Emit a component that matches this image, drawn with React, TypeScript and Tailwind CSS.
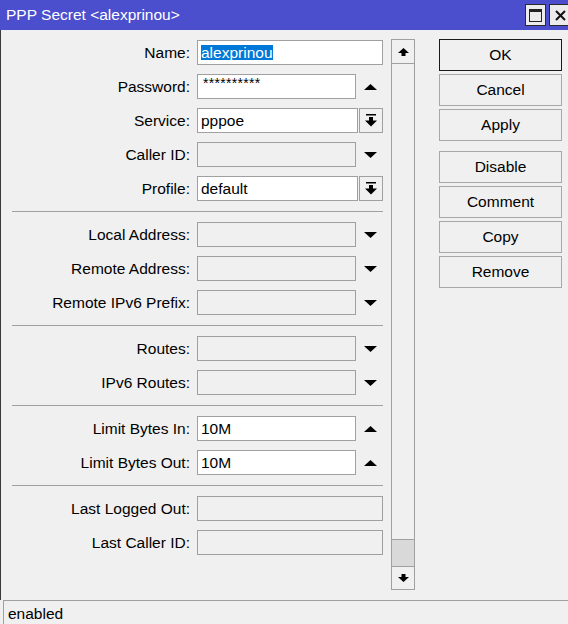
import * as React from 'react';

const UpTri = () => (
  <svg width="13" height="6" viewBox="0 0 13 6">
    <polygon points="0,6 13,6 6.5,0" fill="#000" />
  </svg>
);

const DownTri = () => (
  <svg width="13" height="6" viewBox="0 0 13 6">
    <polygon points="0,0 13,0 6.5,6" fill="#000" />
  </svg>
);

const ComboGlyph = () => (
  <svg width="12" height="13" viewBox="0 0 12 13">
    <rect x="1" y="0" width="10" height="1.5" fill="#000" />
    <rect x="4" y="3" width="4" height="4" fill="#000" />
    <polygon points="0,6.5 12,6.5 6,12.5" fill="#000" />
  </svg>
);

const ScrollUp = () => (
  <svg width="11" height="8" viewBox="0 0 11 8">
    <polygon points="0,5 11,5 5.5,0" fill="#000" />
    <rect x="3.5" y="4.5" width="4" height="3.5" fill="#000" />
  </svg>
);

const ScrollDown = () => (
  <svg width="11" height="8" viewBox="0 0 11 8">
    <polygon points="0,3 11,3 5.5,8" fill="#000" />
    <rect x="3.5" y="0" width="4" height="3.5" fill="#000" />
  </svg>
);

type FieldKind = 'up' | 'down' | 'combo' | 'none';

interface RowProps {
  readonly label: string;
  readonly value?: React.ReactNode;
  readonly filled?: boolean;
  readonly kind?: FieldKind;
}

function Row({label, value, filled, kind = 'none'}: RowProps): JSX.Element {
  const wide = kind === 'none';
  return (
    <div className="flex h-[25px] items-center">
      <div className="w-[189px] shrink-0 text-right">{label}</div>
      <div
        className={`ml-[7px] flex h-[25px] items-center border border-[#a0a0a0] px-[3px] ${
          filled ? 'bg-white' : 'bg-[#f0f0f0]'
        } ${wide ? 'w-[186px]' : kind === 'combo' ? 'w-[161px]' : 'w-[159px]'}`}
      >
        {value}
      </div>
      {kind === 'up' && (
        <div className="flex w-[27px] justify-center pl-[2px]">
          <UpTri />
        </div>
      )}
      {kind === 'down' && (
        <div className="flex w-[27px] justify-center pl-[2px]">
          <DownTri />
        </div>
      )}
      {kind === 'combo' && (
        <div className="ml-[1px] flex h-[25px] w-[24px] items-center justify-center border border-[#a0a0a0] bg-[#f0f0f0]">
          <ComboGlyph />
        </div>
      )}
    </div>
  );
}

const Sep = () => <div className="my-px ml-[11px] h-px w-[371px] bg-[#a0a0a0]" />;

function Btn({label, primary}: {label: string; primary?: boolean}): JSX.Element {
  return (
    <div
      className={`flex h-[32px] w-[123px] items-center justify-center border bg-[#f0f0f0] ${
        primary ? 'border-[#1a1a1a]' : 'border-[#a8a8a8]'
      }`}
    >
      {label}
    </div>
  );
}

export default function App(): JSX.Element {
  return (
    <div className="flex h-[624px] w-[568px] flex-col overflow-hidden bg-[#f0f0f0] font-['Liberation_Sans',Arial,sans-serif] text-[15.5px] leading-none text-black">
      <div className="flex h-[30px] shrink-0 items-center bg-[#4b4fcd] pl-[6px] text-white">
        <span className="flex-1">PPP Secret &lt;alexprinou&gt;</span>
        <div className="flex h-[22px] w-[21px] items-center justify-center border border-[#2a2a2a] bg-[#ececec]">
          <div className="h-[13px] w-[13px] border border-[#222] border-t-[3px]" />
        </div>
        <div className="ml-[3px] mr-[-3px] flex h-[22px] w-[22px] items-center justify-center border border-[#2a2a2a] bg-[#ececec]">
          <svg width="11" height="11" viewBox="0 0 11 11">
            <path d="M1 1 L10 10 M10 1 L1 10" stroke="#111" strokeWidth="2" />
          </svg>
        </div>
      </div>

      <div className="flex flex-1 border-l border-[#3a3a3a]">
        <div className="flex w-[390px] shrink-0 flex-col gap-[9px] pt-[10px]">
          <Row
            label="Name:"
            filled
            value={<span className="bg-[#0078d7] text-white">alexprinou</span>}
          />
          <Row
            label="Password:"
            filled
            kind="up"
            value={
              <span className="-mt-[8px] pl-[2px] text-[14px] tracking-[0.3px]">**********</span>
            }
          />
          <Row label="Service:" filled kind="combo" value="pppoe" />
          <Row label="Caller ID:" kind="down" />
          <Row label="Profile:" filled kind="combo" value="default" />
          <Sep />
          <Row label="Local Address:" kind="down" />
          <Row label="Remote Address:" kind="down" />
          <Row label="Remote IPv6 Prefix:" kind="down" />
          <Sep />
          <Row label="Routes:" kind="down" />
          <Row label="IPv6 Routes:" kind="down" />
          <Sep />
          <Row label="Limit Bytes In:" filled kind="up" value="10M" />
          <Row label="Limit Bytes Out:" filled kind="up" value="10M" />
          <Sep />
          <Row label="Last Logged Out:" />
          <Row label="Last Caller ID:" />
        </div>

        <div className="mt-[9px] flex h-[551px] w-[24px] shrink-0 flex-col border border-[#a0a0a0]">
          <div className="flex h-[24px] shrink-0 items-center justify-center border-b border-[#a0a0a0] bg-[#f0f0f0]">
            <ScrollUp />
          </div>
          <div className="flex-1 bg-[#f0f0f0]" />
          <div className="h-[27px] shrink-0 border-t border-[#a0a0a0] bg-[#d9d9d9]" />
          <div className="flex h-[23px] shrink-0 items-center justify-center border-t border-[#a0a0a0] bg-[#f0f0f0]">
            <ScrollDown />
          </div>
        </div>

        <div className="ml-[24px] mt-[9px] flex flex-col gap-[3px]">
          <Btn label="OK" primary />
          <Btn label="Cancel" />
          <Btn label="Apply" />
          <div className="h-[4px]" />
          <Btn label="Disable" />
          <Btn label="Comment" />
          <Btn label="Copy" />
          <Btn label="Remove" />
        </div>
      </div>

      <div className="flex h-[24px] shrink-0 pl-[3px]">
        <div className="flex flex-1 items-center border-l border-t border-[#a0a0a0] pl-[4px] pt-[2px]">
          enabled
        </div>
      </div>
    </div>
  );
}
